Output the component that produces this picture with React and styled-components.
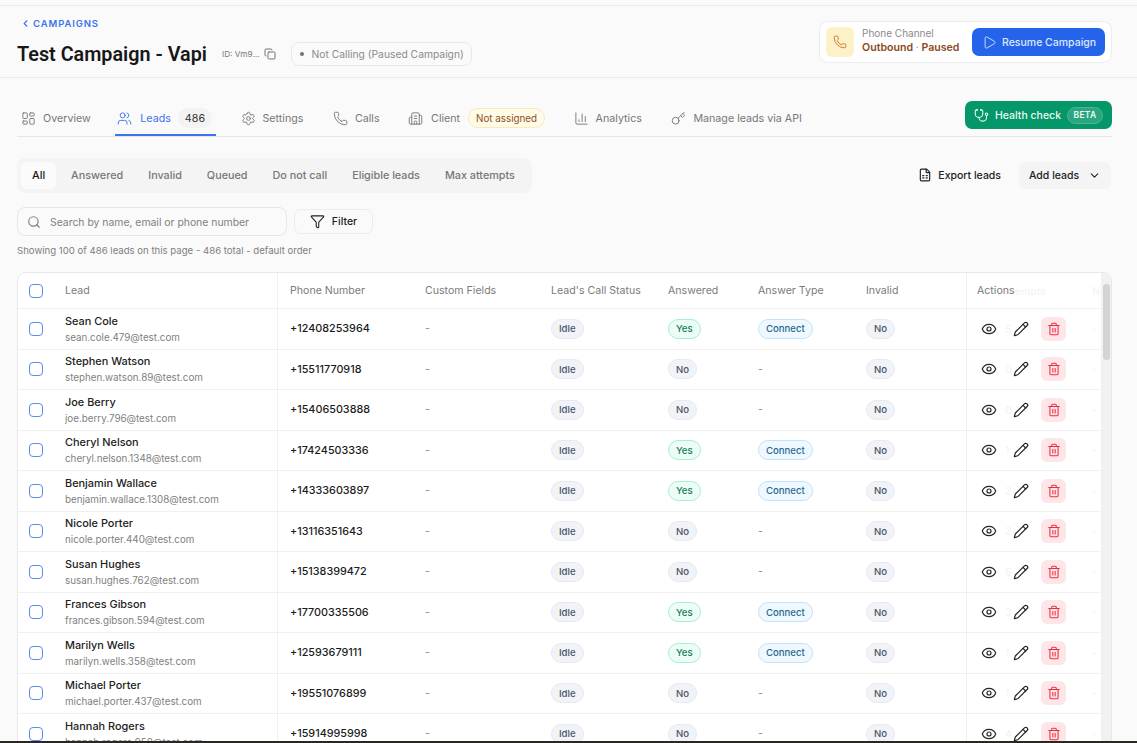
import React from 'react';
import styled, { createGlobalStyle } from 'styled-components';
import {
  ChevronLeft, Copy, Phone, Play, LayoutDashboard, Users, Settings, Building2, ChartColumn,
  Key, Stethoscope, FileSpreadsheet, ChevronDown, Search, Funnel, Eye, Pencil, Trash2,
} from 'lucide-react';

const GlobalStyle = createGlobalStyle`
    html, body {
        margin: 0;
        padding: 0;
        height: 100%;
        overflow: hidden;
        background: #fafafa;
        font-family: Inter, "Liberation Sans", sans-serif;
        color: #171717;
    }
    * { box-sizing: border-box; }
`;

const Page = styled.div`
    height: 743px;
    display: flex;
    flex-direction: column;
    overflow: hidden;
    padding-top: 5px;
    border-bottom: 2px solid #2a2723;
`;

const Header = styled.header`
    height: 73px;
    flex: none;
    display: flex;
    justify-content: space-between;
    border-top: 1px solid #ececec;
    border-bottom: 1px solid #ececec;
    padding: 0 25px 0 17px;
`;

const HeaderLeft = styled.div`
    padding-top: 12px;
`;

const BackLink = styled.div`
    display: flex;
    align-items: center;
    gap: 2px;
    margin-left: 3px;
    font-size: 9.5px;
    font-weight: 600;
    letter-spacing: 0.9px;
    color: #3b74ec;
`;

const TitleRow = styled.div`
    display: flex;
    align-items: center;
    margin-top: 12px;
`;

const Title = styled.h1`
    margin: 2px 0 0;
    font-family: Roboto, Inter, sans-serif;
    font-size: 19.8px;
    line-height: 24px;
    font-weight: 600;
    color: #171717;
`;

const IdLabel = styled.span`
    display: flex;
    align-items: center;
    gap: 4px;
    margin-left: 15px;
    font-size: 8.2px;
    color: #777;
`;

const StatusPill = styled.div`
    display: flex;
    align-items: center;
    gap: 8px;
    height: 24px;
    margin-left: 15px;
    padding: 0 7px;
    border: 1px solid #e8e8e8;
    border-radius: 8px;
    font-size: 10.3px;
    color: #8a8a8a;
`;

const Dot = styled.i`
    width: 4px;
    height: 4px;
    margin-left: 1px;
    border-radius: 50%;
    background: #70737c;
`;

const ChannelCard = styled.div`
    display: flex;
    align-items: center;
    align-self: flex-start;
    width: 293px;
    height: 42px;
    margin-top: 15px;
    padding: 0 6px 0 6px;
    background: #fff;
    border: 1px solid #ededed;
    border-radius: 9px;
`;

const ChannelIcon = styled.div`
    width: 28px;
    height: 30px;
    flex: none;
    display: flex;
    align-items: center;
    justify-content: center;
    border-radius: 6px;
    background: #fdf1c7;
    color: #c9772c;
`;

const ChannelText = styled.div`
    flex: 1;
    margin-left: 8px;
    padding-bottom: 3px;
    font-size: 10px;
    line-height: 14px;
    color: #8a8a8a;
`;

const ChannelState = styled.div`
    margin-top: 1px;
    font-size: 10.6px;
    font-weight: 600;
    color: #8a4a22;
    white-space: nowrap;
`;

const StateSep = styled.span`
    font-weight: 400;
    color: #a8a8a8;
`;

const ResumeButton = styled.button`
    width: 133px;
    height: 28px;
    flex: none;
    display: flex;
    align-items: center;
    gap: 5px;
    padding: 0 0 0 10px;
    border: 0;
    border-radius: 7px;
    background: #2563eb;
    color: #dfe8fd;
    font: 500 10.5px Inter, sans-serif;
    white-space: nowrap;
`;

const Main = styled.main`
    flex: 1;
    min-height: 0;
    display: flex;
    flex-direction: column;
    padding: 22px 25px 0 17px;
`;

const TabBar = styled.nav`
    height: 37px;
    flex: none;
    display: flex;
    align-items: flex-start;
    border-bottom: 1px solid #e6e6e6;
`;

const Tab = styled.div`
    height: 36px;
    display: flex;
    align-items: center;
    gap: ${p => p.$gap}px;
    padding: 2px 4px 0 ${p => (p.$active ? 2 : 4)}px;
    margin-right: ${p => p.$after}px;
    font-size: 10.7px;
    color: ${p => (p.$active ? '#3b74ec' : '#777')};
    border-bottom: 2px solid ${p => (p.$active ? '#3b74ec' : 'transparent')};
    white-space: nowrap;
`;

const CountBadge = styled.span`
    height: 20px;
    padding: 0 7px;
    margin-left: -1px;
    display: flex;
    align-items: center;
    border-radius: 10px;
    background: #f3f3f3;
    color: #333;
`;

const AssignBadge = styled.span`
    height: 20px;
    padding: 0 7px;
    display: flex;
    align-items: center;
    border: 1px solid #fbeab5;
    border-radius: 10px;
    background: #fefce8;
    color: #8f4e1d;
    font-size: 9.8px;
`;

const HealthButton = styled.button`
    margin-left: auto;
    margin-top: 1px;
    width: 147px;
    height: 28px;
    flex: none;
    display: flex;
    align-items: center;
    gap: 6px;
    padding: 0 0 0 9px;
    border: 0;
    border-radius: 7px;
    background: #059669;
    color: #eafaf3;
    font: 500 10.5px Inter, sans-serif;
    white-space: nowrap;
`;

const BetaTag = styled.span`
    height: 17px;
    width: 36px;
    justify-content: center;
    display: flex;
    align-items: center;
    border: 1px solid #4db596;
    border-radius: 9px;
    background: #2ba680;
    font-size: 8.5px;
    font-weight: 600;
    letter-spacing: 0.3px;
`;

const FilterRow = styled.div`
    display: flex;
    align-items: center;
    justify-content: space-between;
    margin-top: 20px;
    height: 36px;
    flex: none;
`;

const FilterGroup = styled.div`
    display: flex;
    align-items: center;
    height: 35px;
    padding: 0 5px 0 4px;
    border-radius: 8px;
    background: #f4f4f4;
`;

const FilterTab = styled.div`
    height: 27px;
    padding: 0 ${p => (p.$active ? 11 : 12.5)}px;
    margin-right: ${p => (p.$active ? 2.5 : 0)}px;
    display: flex;
    align-items: center;
    border-radius: 6px;
    font-size: 10.8px;
    font-weight: 500;
    color: ${p => (p.$active ? '#171717' : '#777')};
    background: ${p => (p.$active ? '#fbfbfb' : 'transparent')};
    white-space: nowrap;
`;

const ExportGroup = styled.div`
    display: flex;
    align-items: center;
    margin-right: 1px;
`;

const ExportLink = styled.div`
    display: flex;
    align-items: center;
    gap: 6px;
    margin-right: 18px;
    font-size: 10.5px;
    font-weight: 500;
    color: #222;
`;

const AddButton = styled.div`
    width: 92px;
    height: 27px;
    display: flex;
    align-items: center;
    justify-content: space-between;
    padding: 0 10px;
    border-radius: 7px;
    background: #f4f4f4;
    font-size: 10.5px;
    font-weight: 500;
    color: #222;
`;

const SearchRow = styled.div`
    display: flex;
    align-items: center;
    gap: 7px;
    margin-top: 14px;
    flex: none;
`;

const SearchBox = styled.div`
    width: 270px;
    height: 29px;
    display: flex;
    align-items: center;
    gap: 9px;
    padding: 1px 9px 0;
    border: 1px solid #e6e6e6;
    border-radius: 8px;
    font-size: 10.4px;
    color: #808080;
`;

const FilterButton = styled.div`
    width: 79px;
    height: 25px;
    display: flex;
    align-items: center;
    justify-content: center;
    gap: 7px;
    border: 1px solid #ececec;
    border-radius: 7px;
    font-size: 10.5px;
    font-weight: 500;
    color: #222;
`;

const Summary = styled.div`
    margin-top: 8px;
    flex: none;
    font-size: 9.6px;
    line-height: 14px;
    color: #808080;
`;

const TableCard = styled.section`
    flex: 1;
    min-height: 0;
    display: flex;
    margin-top: 14px;
    background: #fff;
    border: 1px solid #e8e8e8;
    border-bottom: 0;
    border-radius: 9px 9px 0 0;
    overflow: hidden;
`;

const TableBody = styled.div`
    flex: 1;
    min-width: 0;
`;

const Row = styled.div`
    display: grid;
    grid-template-columns: 260px 135px 126px 117px 90px 108px 112px 1fr;
    height: ${p => (p.$head ? 36 : 40.5)}px;
    border-bottom: 1px solid #f0f0f0;
    font-size: 10.6px;
    color: ${p => (p.$head ? '#7b7b7b' : '#171717')};
`;

const Cell = styled.div`
    display: flex;
    align-items: center;
    min-width: 0;
    padding-left: ${p => p.$pad ?? 0}px;
    ${p => p.$divide && 'border-right: 1px solid #f0f0f0;'}
`;

const Check = styled.i`
    width: 14px;
    height: 14px;
    margin-left: 11px;
    margin-right: 22px;
    flex: none;
    border: 1px solid #5b8def;
    border-radius: 4px;
    background: #fff;
`;

const LeadName = styled.div`
    font-size: 10.9px;
    line-height: 14px;
    font-weight: 500;
    color: #222;
`;

const LeadMail = styled.div`
    margin-top: 4px;
    font-size: 9.8px;
    line-height: 12px;
    color: #808080;
`;

const PhoneText = styled.span`
    font-size: 10.8px;
    font-weight: 500;
    color: #1c1c1c;
`;

const Dash = styled.span`
    color: #8a8a8a;
`;

const badgeTones = {
  gray: ['#f1f3f8', '#e6e9f0', '#4b5563'],
  green: ['#ecfdf5', '#a7f0cf', '#177a5c'],
  blue: ['#f0f8ff', '#bfe3fb', '#1f6a8f'],
};

const Badge = styled.span`
    height: 20px;
    padding: 0 7px;
    display: inline-flex;
    align-items: center;
    border-radius: 10px;
    font-size: 9.6px;
    font-weight: 500;
    background: ${p => badgeTones[p.$tone][0]};
    border: 1px solid ${p => badgeTones[p.$tone][1]};
    color: ${p => badgeTones[p.$tone][2]};
`;

const ActionCell = styled(Cell)`
    position: relative;
    padding-left: ${p => p.$pad ?? 14}px;
    border-left: 1px solid #f0f0f0;
`;

const ActionIcon = styled.span`
    display: flex;
    margin-right: ${p => p.$gap}px;
    color: #262626;
`;

const DeleteButton = styled.span`
    width: 25px;
    height: 24px;
    display: flex;
    align-items: center;
    justify-content: center;
    border-radius: 6px;
    background: #fee5e7;
    color: #ee2b40;
`;

// columns scrolled underneath the sticky Actions column, barely visible through it
const GhostText = styled.span`
    position: absolute;
    left: ${p => p.$left}px;
    top: 50%;
    transform: translateY(-50%);
    color: #f2f2f2;
`;

const ScrollTrack = styled.div`
    width: 10px;
    flex: none;
    padding-top: 11px;
    background: #f1f1f1;
`;

const ScrollThumb = styled.div`
    width: 7px;
    height: 76px;
    margin-left: 1.5px;
    border-radius: 4px;
    background: #d4d4d4;
`;

const leads = [
  ['Sean Cole', 'sean.cole.479@test.com', '+12408253964', true, 5],
  ['Stephen Watson', 'stephen.watson.89@test.com', '+15511770918', false, 0],
  ['Joe Berry', 'joe.berry.796@test.com', '+15406503888', false, 0],
  ['Cheryl Nelson', 'cheryl.nelson.1348@test.com', '+17424503336', true, 1],
  ['Benjamin Wallace', 'benjamin.wallace.1308@test.com', '+14333603897', true, 2],
  ['Nicole Porter', 'nicole.porter.440@test.com', '+13116351643', false, 2],
  ['Susan Hughes', 'susan.hughes.762@test.com', '+15138399472', false, 5],
  ['Frances Gibson', 'frances.gibson.594@test.com', '+17700335506', true, 3],
  ['Marilyn Wells', 'marilyn.wells.358@test.com', '+12593679111', true, 1],
  ['Michael Porter', 'michael.porter.437@test.com', '+19551076899', false, 1],
  ['Hannah Rogers', 'hannah.rogers.950@test.com', '+15914995998', false, 4],
];

const tabs = [
  { label: 'Overview', Icon: LayoutDashboard, gap: 7, after: 20.5 },
  { label: 'Leads', Icon: Users, gap: 8, after: 20.5, active: true, extra: <CountBadge>486</CountBadge> },
  { label: 'Settings', Icon: Settings, gap: 7, after: 21.5 },
  { label: 'Calls', Icon: Phone, gap: 7, after: 20.5 },
  { label: 'Client', Icon: Building2, gap: 8, after: 20.5, extra: <AssignBadge>Not assigned</AssignBadge> },
  { label: 'Analytics', Icon: ChartColumn, gap: 7, after: 21.5 },
  { label: 'Manage leads via API', Icon: Key, gap: 7, after: 0 },
];

const filters = ['All', 'Answered', 'Invalid', 'Queued', 'Do not call', 'Eligible leads', 'Max attempts'];

const App = () => {
  return (
    <Page>
      <GlobalStyle />
      <Header>
        <HeaderLeft>
          <BackLink><ChevronLeft size={11} strokeWidth={2.4} />CAMPAIGNS</BackLink>
          <TitleRow>
            <Title>Test Campaign - Vapi</Title>
            <IdLabel>ID: Vm9… <Copy size={12} /></IdLabel>
            <StatusPill><Dot />Not Calling (Paused Campaign)</StatusPill>
          </TitleRow>
        </HeaderLeft>
        <ChannelCard>
          <ChannelIcon><Phone size={14} strokeWidth={1.6} /></ChannelIcon>
          <ChannelText>
            Phone Channel
            <ChannelState>Outbound <StateSep>·</StateSep> Paused</ChannelState>
          </ChannelText>
          <ResumeButton><Play size={15} strokeWidth={1.4} />Resume Campaign</ResumeButton>
        </ChannelCard>
      </Header>
      <Main>
        <TabBar>
          {tabs.map(({ label, Icon, gap, after, active, extra }) => (
            <Tab key={label} $gap={gap} $after={after} $active={active}>
              <Icon size={15} strokeWidth={1.5} />{label}{extra}
            </Tab>
          ))}
          <HealthButton>
            <Stethoscope size={15} strokeWidth={1.7} />Health check<BetaTag>BETA</BetaTag>
          </HealthButton>
        </TabBar>
        <FilterRow>
          <FilterGroup>
            {filters.map((f, i) => <FilterTab key={f} $active={i === 0}>{f}</FilterTab>)}
          </FilterGroup>
          <ExportGroup>
            <ExportLink><FileSpreadsheet size={14} />Export leads</ExportLink>
            <AddButton>Add leads<ChevronDown size={13} /></AddButton>
          </ExportGroup>
        </FilterRow>
        <SearchRow>
          <SearchBox><Search size={14} />Search by name, email or phone number</SearchBox>
          <FilterButton><Funnel size={15} strokeWidth={1.7} />Filter</FilterButton>
        </SearchRow>
        <Summary>Showing 100 of 486 leads on this page - 486 total - default order</Summary>
        <TableCard>
          <TableBody>
            <Row $head>
              <Cell $divide><Check />Lead</Cell>
              <Cell $pad={12}>Phone Number</Cell>
              <Cell $pad={12}>Custom Fields</Cell>
              <Cell $pad={12}>Lead's Call Status</Cell>
              <Cell $pad={12}>Answered</Cell>
              <Cell $pad={12}>Answer Type</Cell>
              <Cell $pad={12}>Invalid</Cell>
              <ActionCell $pad={10}>
                <GhostText $left={48}>empts</GhostText>
                <GhostText $left={125}>N</GhostText>
                Actions
              </ActionCell>
            </Row>
            {leads.map(([name, mail, phone, yes, attempts]) => (
              <Row key={mail}>
                <Cell $divide>
                  <Check />
                  <div>
                    <LeadName>{name}</LeadName>
                    <LeadMail>{mail}</LeadMail>
                  </div>
                </Cell>
                <Cell $pad={12}><PhoneText>{phone}</PhoneText></Cell>
                <Cell $pad={12}><Dash>-</Dash></Cell>
                <Cell $pad={12}><Badge $tone="gray">Idle</Badge></Cell>
                <Cell $pad={12}><Badge $tone={yes ? 'green' : 'gray'}>{yes ? 'Yes' : 'No'}</Badge></Cell>
                <Cell $pad={12}>{yes ? <Badge $tone="blue">Connect</Badge> : <Dash>-</Dash>}</Cell>
                <Cell $pad={12}><Badge $tone="gray">No</Badge></Cell>
                <ActionCell>
                  <GhostText $left={38}>{attempts}</GhostText>
                  <GhostText $left={125}>-</GhostText>
                  <ActionIcon $gap={16}><Eye size={16} strokeWidth={1.8} /></ActionIcon>
                  <ActionIcon $gap={12}><Pencil size={16} strokeWidth={1.8} /></ActionIcon>
                  <DeleteButton><Trash2 size={14} strokeWidth={1.8} /></DeleteButton>
                </ActionCell>
              </Row>
            ))}
          </TableBody>
          <ScrollTrack><ScrollThumb /></ScrollTrack>
        </TableCard>
      </Main>
    </Page>
  );
};

export default App;
